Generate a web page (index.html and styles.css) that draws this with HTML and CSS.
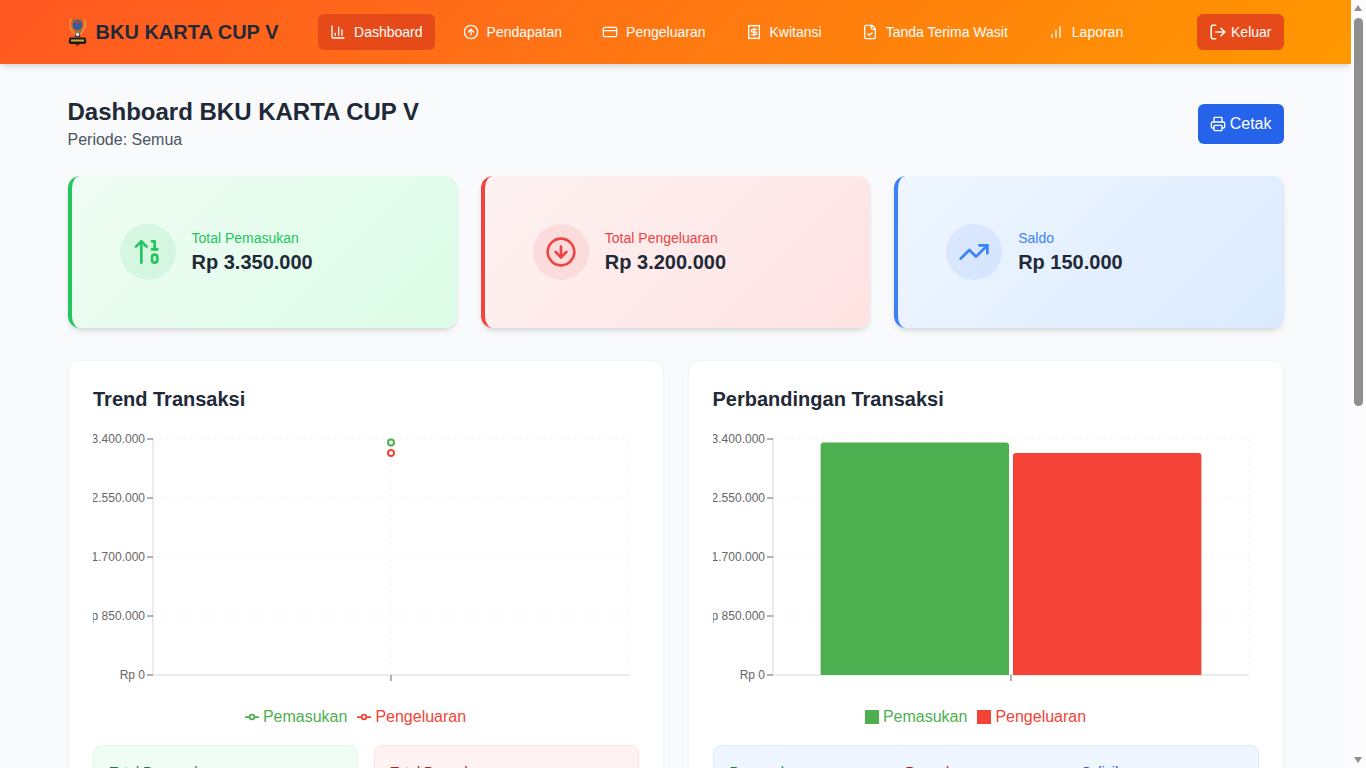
FILE: index.html
```html
<!DOCTYPE html>
<html lang="id">
<head>
<meta charset="utf-8">
<title>BKU KARTA CUP V</title>
<link rel="stylesheet" href="styles.css">
</head>
<body>
<div class="scrollbar" aria-hidden="true">
  <span class="scroll-up"></span>
  <span class="scroll-thumb"></span>
  <span class="scroll-down"></span>
</div>
<header class="topbar">
  <div class="topbar-inner">
    <div class="brand">
      <svg class="logo" viewBox="0 0 20 32" aria-hidden="true">
        <path d="M4 3C0 5 1 13 7 18" fill="none" stroke="#d9a24e" stroke-width="1.300"/>
        <path d="M15 3c4 2 3 10-3 15" fill="none" stroke="#d9a24e" stroke-width="1.300"/>
        <path d="M4 3h11l-1 11-2.500 5h-3L6 14z" fill="#a9702f"/>
        <circle cx="9.500" cy="9" r="5" fill="#2f5f96"/>
        <path d="M6 6.500a5 5 0 0 1 7 0q-3.500 2-7 0z" fill="#b8453a"/>
        <path d="M7.500 17h4l.8 4H6.700z" fill="#3a3640"/>
        <circle cx="9.500" cy="18.500" r="1.800" fill="#d7dde6"/>
        <path d="M1.500 21.500h16l1 5-2 1.500H2.500l-2-1.500z" fill="#1c1917"/>
        <path d="M3 23.500h13v2H3z" fill="#d8a93e"/>
        <path d="M7 28h5l-2.500 2.500z" fill="#a3231d"/>
      </svg>
      <span class="brand-name">BKU KARTA CUP V</span>
    </div>
    <nav class="nav">
      <a class="nav-item active" href="#">
        <svg class="ico" viewBox="0 0 24 24"><path d="M3 3v16a2 2 0 0 0 2 2h16"/><path d="M18 17V9"/><path d="M13 17V5"/><path d="M8 17v-3"/></svg>
        <span>Dashboard</span>
      </a>
      <a class="nav-item" href="#">
        <svg class="ico" viewBox="0 0 24 24"><circle cx="12" cy="12" r="10"/><path d="m16 12-4-4-4 4"/><path d="M12 16V8"/></svg>
        <span>Pendapatan</span>
      </a>
      <a class="nav-item" href="#">
        <svg class="ico" viewBox="0 0 24 24"><rect x="2" y="5" width="20" height="14" rx="2"/><path d="M2 10h20"/></svg>
        <span>Pengeluaran</span>
      </a>
      <a class="nav-item" href="#">
        <svg class="ico" viewBox="0 0 24 24"><path d="M4 2v20l2-1 2 1 2-1 2 1 2-1 2 1 2-1 2 1V2l-2 1-2-1-2 1-2-1-2 1-2-1-2 1Z"/><path d="M16 8h-6a2 2 0 1 0 0 4h4a2 2 0 1 1 0 4H8"/><path d="M12 17.500v-11"/></svg>
        <span>Kwitansi</span>
      </a>
      <a class="nav-item" href="#">
        <svg class="ico" viewBox="0 0 24 24"><path d="M15 2H6a2 2 0 0 0-2 2v16a2 2 0 0 0 2 2h12a2 2 0 0 0 2-2V7Z"/><path d="M14 2v4a2 2 0 0 0 2 2h4"/><path d="m9 15 2 2 4-4"/></svg>
        <span>Tanda Terima Wasit</span>
      </a>
      <a class="nav-item" href="#">
        <svg class="ico" viewBox="0 0 24 24"><path d="M6 20v-4"/><path d="M12 20V10"/><path d="M18 20V4"/></svg>
        <span>Laporan</span>
      </a>
    </nav>
    <button class="logout" type="button">
      <svg class="ico ico-18" viewBox="0 0 24 24"><path d="M9 21H5a2 2 0 0 1-2-2V5a2 2 0 0 1 2-2h4"/><path d="m16 17 5-5-5-5"/><path d="M21 12H9"/></svg>
      <span>Keluar</span>
    </button>
  </div>
</header>

<main class="page">
  <section class="page-head">
    <div>
      <h1 class="page-title">Dashboard BKU KARTA CUP V</h1>
      <p class="page-sub">Periode: Semua</p>
    </div>
    <button class="print" type="button">
      <svg class="ico" viewBox="0 0 24 24"><path d="M6 18H4a2 2 0 0 1-2-2v-5a2 2 0 0 1 2-2h16a2 2 0 0 1 2 2v5a2 2 0 0 1-2 2h-2"/><path d="M6 9V3a1 1 0 0 1 1-1h10a1 1 0 0 1 1 1v6"/><rect x="6" y="14" width="12" height="8" rx="1"/></svg>
      <span>Cetak</span>
    </button>
  </section>

  <section class="stats">
    <article class="stat stat-green">
      <div class="stat-icon">
        <svg class="ico ico-32" viewBox="0 0 24 24"><path d="m3 8 4-4 4 4"/><path d="M7 4v16"/><path d="M17 10V4h-2"/><path d="M15 10h4"/><rect x="15" y="14" width="4" height="6" ry="2"/></svg>
      </div>
      <div>
        <p class="stat-label">Total Pemasukan</p>
        <p class="stat-value">Rp 3.350.000</p>
      </div>
    </article>
    <article class="stat stat-red">
      <div class="stat-icon">
        <svg class="ico ico-32" viewBox="0 0 24 24"><circle cx="12" cy="12" r="10"/><path d="M12 8v8"/><path d="m8 12 4 4 4-4"/></svg>
      </div>
      <div>
        <p class="stat-label">Total Pengeluaran</p>
        <p class="stat-value">Rp 3.200.000</p>
      </div>
    </article>
    <article class="stat stat-blue">
      <div class="stat-icon">
        <svg class="ico ico-32" viewBox="0 0 24 24"><path d="M22 7 13.500 15.500 8.500 10.500 2 17"/><path d="M16 7h6v6"/></svg>
      </div>
      <div>
        <p class="stat-label">Saldo</p>
        <p class="stat-value">Rp 150.000</p>
      </div>
    </article>
  </section>

  <section class="charts">
    <article class="panel">
      <h2 class="panel-title">Trend Transaksi</h2>
      <svg class="chart" width="546" height="270" aria-label="Trend Transaksi">
        <g class="grid">
          <path d="M60 10H536M60 69H536M60 128H536M60 187H536"/>
          <path d="M298 10V246M536 10V246"/>
        </g>
        <g class="axis">
          <path d="M60 10V246"/><path d="M60 246H536"/>
        </g>
        <g class="ticks">
          <path d="M54 10H60M54 69H60M54 128H60M54 187H60M54 246H60M298 246V252"/>
        </g>
        <g class="tick-text">
          <text x="52" y="14.260">Rp 3.400.000</text>
          <text x="52" y="73.260">Rp 2.550.000</text>
          <text x="52" y="132.260">Rp 1.700.000</text>
          <text x="52" y="191.260">Rp 850.000</text>
          <text x="52" y="250.260">Rp 0</text>
        </g>
        <circle class="dot dot-green" cx="298" cy="13.500" r="3"/>
        <circle class="dot dot-red" cx="298" cy="23.900" r="3"/>
      </svg>
      <div class="legend">
        <span class="legend-item green">
          <svg class="legend-ico" viewBox="0 0 32 32"><path d="M0 16h10.670M21.330 16H32" class="leg-line"/><circle cx="16" cy="16" r="5.330" class="leg-dot"/></svg>Pemasukan
        </span>
        <span class="legend-item red">
          <svg class="legend-ico" viewBox="0 0 32 32"><path d="M0 16h10.670M21.330 16H32" class="leg-line"/><circle cx="16" cy="16" r="5.330" class="leg-dot"/></svg>Pengeluaran
        </span>
      </div>
      <div class="summary-two">
        <div class="summary summary-green">
          <p class="summary-label">Total Pemasukan</p>
          <p class="summary-value">Rp 3.350.000</p>
        </div>
        <div class="summary summary-red">
          <p class="summary-label">Total Pengeluaran</p>
          <p class="summary-value">Rp 3.200.000</p>
        </div>
      </div>
    </article>

    <article class="panel">
      <h2 class="panel-title">Perbandingan Transaksi</h2>
      <svg class="chart" width="546" height="270" aria-label="Perbandingan Transaksi">
        <g class="grid">
          <path d="M60 10H536M60 69H536M60 128H536M60 187H536"/>
          <path d="M298 10V246M536 10V246"/>
        </g>
        <g class="axis">
          <path d="M60 10V246"/><path d="M60 246H536"/>
        </g>
        <path class="bar-green" d="M107.600 246V16.500a3 3 0 0 1 3-3H293a3 3 0 0 1 3 3V246Z"/>
        <path class="bar-red" d="M300 246V26.900a3 3 0 0 1 3-3H485.400a3 3 0 0 1 3 3V246Z"/>
        <g class="ticks">
          <path d="M54 10H60M54 69H60M54 128H60M54 187H60M54 246H60M298 246V252"/>
        </g>
        <g class="tick-text">
          <text x="52" y="14.260">Rp 3.400.000</text>
          <text x="52" y="73.260">Rp 2.550.000</text>
          <text x="52" y="132.260">Rp 1.700.000</text>
          <text x="52" y="191.260">Rp 850.000</text>
          <text x="52" y="250.260">Rp 0</text>
        </g>
      </svg>
      <div class="legend">
        <span class="legend-item green"><span class="legend-box"></span>Pemasukan</span>
        <span class="legend-item red"><span class="legend-box"></span>Pengeluaran</span>
      </div>
      <div class="summary summary-blue">
        <div class="summary-cols">
          <div>
            <p class="summary-label label-green">Pemasukan</p>
            <p class="summary-value">Rp 3.350.000</p>
          </div>
          <div>
            <p class="summary-label label-red">Pengeluaran</p>
            <p class="summary-value">Rp 3.200.000</p>
          </div>
          <div>
            <p class="summary-label label-blue">Selisih</p>
            <p class="summary-value">Rp 150.000</p>
          </div>
        </div>
      </div>
    </article>
  </section>
</main>
</body>
</html>
```
FILE: styles.css
```css
* { box-sizing: border-box; }
html { background: #f9fafb; }
body {
  margin: 0;
  padding-right: 15px;
  background: #f9fafb;
  color: #1f2937;
  font-family: "Liberation Sans", Arial, sans-serif;
  font-size: 16px;
  line-height: 24px;
}
p, h1, h2 { margin: 0; }

.scrollbar {
  position: fixed;
  top: 0;
  right: 0;
  bottom: 0;
  z-index: 5;
  width: 15px;
  background: #fbfbfb;
}
.scroll-thumb {
  position: absolute;
  top: 18px;
  left: 3px;
  width: 9px;
  height: 388px;
  border-radius: 5px;
  background: #8f8f8f;
}
.scroll-up,
.scroll-down {
  position: absolute;
  left: 3px;
  width: 0;
  height: 0;
  border-left: 4.5px solid transparent;
  border-right: 4.5px solid transparent;
}
.scroll-up { top: 5px; border-bottom: 6px solid #8f8f8f; }
.scroll-down { bottom: 5px; border-top: 6px solid #8f8f8f; }

.topbar {
  position: relative;
  z-index: 2;
  height: 64px;
  background: linear-gradient(135deg, #ff5722, #ff9800);
  box-shadow: 0 4px 6px -1px rgba(0,0,0,.1), 0 2px 4px -2px rgba(0,0,0,.1);
}
.topbar-inner {
  max-width: 1280px;
  height: 100%;
  margin: 0 auto;
  padding: 0 32px;
  display: flex;
  align-items: center;
}
.brand { display: flex; align-items: center; gap: 8px; }
.logo { width: 20px; height: 32px; display: block; }
.brand-name { font-size: 20px; line-height: 28px; font-weight: 700; color: #1f2937; }

.nav { display: flex; gap: 16px; margin-left: 39.6px; flex: 1; }
.nav-item {
  display: flex;
  align-items: center;
  gap: 8px;
  height: 36px;
  padding: 0 12px;
  border-radius: 6px;
  color: #fff;
  font-size: 14px;
  line-height: 20px;
  text-decoration: none;
}
.nav-item.active { background: #e64a19; }

.ico {
  width: 16px;
  height: 16px;
  display: block;
  flex: none;
  fill: none;
  stroke: currentColor;
  stroke-width: 2;
  stroke-linecap: round;
  stroke-linejoin: round;
}
.ico-18 { width: 18px; height: 18px; }
.ico-32 { width: 32px; height: 32px; }

.logout {
  display: flex;
  align-items: center;
  gap: 4px;
  height: 36px;
  padding: 0 12px;
  border: 0;
  border-radius: 6px;
  background: #e64a19;
  color: #fff;
  font: inherit;
  font-size: 14px;
  line-height: 20px;
}

.page {
  max-width: 1280px;
  min-height: 1385px;
  margin: 0 auto;
  padding: 32px 32px 0;
}

.page-head {
  display: flex;
  align-items: center;
  justify-content: space-between;
  margin-bottom: 24px;
}
.page-title { font-size: 24px; line-height: 32px; font-weight: 700; color: #1f2937; }
.page-sub { color: #4b5563; }
.print {
  display: flex;
  align-items: center;
  gap: 4px;
  height: 40px;
  padding: 0 12px;
  border: 0;
  border-radius: 6px;
  background: #2563eb;
  color: #fff;
  font: inherit;
}

.stats {
  display: grid;
  grid-template-columns: repeat(3, 1fr);
  gap: 24px;
  margin-bottom: 32px;
}
.stat {
  display: flex;
  align-items: center;
  gap: 16px;
  padding: 48px;
  border-left: 4px solid;
  border-radius: 12px;
  box-shadow: 0 4px 6px -1px rgba(0,0,0,.1), 0 2px 4px -2px rgba(0,0,0,.1);
}
.stat-icon {
  width: 56px;
  height: 56px;
  border-radius: 50%;
  display: flex;
  align-items: center;
  justify-content: center;
}
.stat-label { font-size: 14px; line-height: 20px; }
.stat-value { font-size: 20px; line-height: 28px; font-weight: 700; color: #1f2937; }
.stat-green { border-color: #22c55e; background: linear-gradient(135deg, #f0fdf4, #dcfce7); color: #22c55e; }
.stat-green .stat-icon { background: rgba(34,197,94,.1); }
.stat-red { border-color: #ef4444; background: linear-gradient(135deg, #fef2f2, #fee2e2); color: #ef4444; }
.stat-red .stat-icon { background: rgba(239,68,68,.1); }
.stat-blue { border-color: #3b82f6; background: linear-gradient(135deg, #eff6ff, #dbeafe); color: #3b82f6; }
.stat-blue .stat-icon { background: rgba(59,130,246,.1); }

.charts {
  display: grid;
  grid-template-columns: repeat(2, 1fr);
  gap: 24px;
}
.panel {
  padding: 24px;
  background: #fff;
  border: 1px solid #f3f4f6;
  border-radius: 12px;
  box-shadow: 0 1px 2px rgba(0,0,0,.05);
}
.panel-title {
  font-size: 20px;
  line-height: 28px;
  font-weight: 700;
  color: #1f2937;
  margin-bottom: 16px;
}
.panel:first-child .panel-title { padding-left: .5px; }
.chart { display: block; }
.grid path { fill: none; stroke: #f5f5f5; stroke-dasharray: 3 3; }
.axis path { fill: none; stroke: #ebebeb; stroke-width: 2; }
.ticks path { fill: none; stroke: #666; }
.tick-text text { fill: #666; font-size: 12px; text-anchor: end; }
.dot { fill: #fff; stroke-width: 2; }
.dot-green { stroke: #4caf50; }
.dot-red { stroke: #f44336; }
.bar-green { fill: #4caf50; }
.bar-red { fill: #f44336; }

.legend {
  height: 30px;
  padding: 6px 20px 0 0;
  display: flex;
  justify-content: center;
  gap: 10px;
  line-height: 24px;
}
.legend-item { display: flex; align-items: center; gap: 4px; }
.legend-ico { width: 14px; height: 14px; display: block; }
.leg-line { fill: none; stroke: currentColor; stroke-width: 4; }
.leg-dot { fill: #fff; stroke: currentColor; stroke-width: 4; }
.legend-box { width: 14px; height: 14px; background: currentColor; }
.green { color: #4caf50; }
.red { color: #f44336; }

.summary-two {
  display: grid;
  grid-template-columns: repeat(2, 1fr);
  gap: 16px;
  margin-top: 16px;
}
.summary {
  padding: 16px;
  border: 1px solid;
  border-radius: 8px;
}
.panel > .summary { margin-top: 16px; }
.summary-label { font-size: 14px; line-height: 20px; }
.summary-value { font-size: 18px; line-height: 28px; font-weight: 700; }
.summary-green { background: #f0fdf4; border-color: #dcfce7; color: #15803d; }
.summary-red { background: #fef2f2; border-color: #fee2e2; color: #b91c1c; }
.summary-blue { background: #eff6ff; border-color: #dbeafe; }
.summary-cols { display: grid; grid-template-columns: repeat(3, 1fr); gap: 16px; }
.label-green { color: #15803d; }
.label-red { color: #b91c1c; }
.label-blue { color: #1d4ed8; }
```
